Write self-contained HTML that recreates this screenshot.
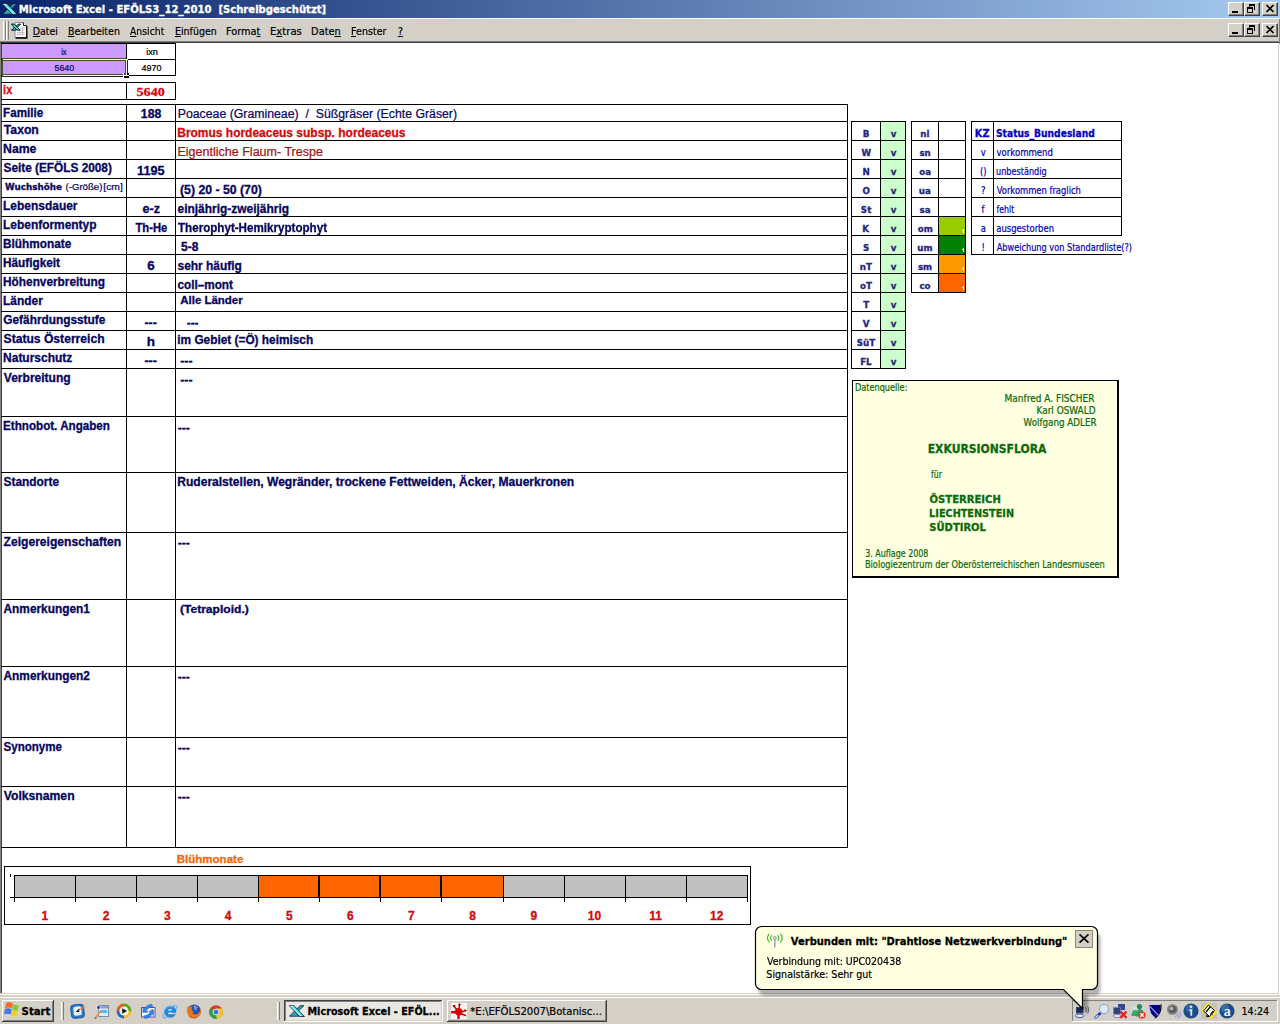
<!DOCTYPE html>
<html lang="de"><head><meta charset="utf-8"><title>Microsoft Excel - EFÖLS3_12_2010 [Schreibgeschützt]</title>
<style>
html,body{margin:0;padding:0;background:#fff}
#s{position:relative;width:1280px;height:1024px;overflow:hidden;background:#fff}
#s>div,#s>span,#s>svg{position:absolute}
#s>span{white-space:pre;transform-origin:0 0;display:block}
#s svg{display:block}
.wb{width:16px;height:14px;background:#d4d0c8;box-sizing:border-box;border:1px solid;border-color:#fff #404040 #404040 #fff;box-shadow:inset -1px -1px 0 #808080}
.wb svg{position:absolute;left:0;top:0}
u{text-decoration:underline;text-underline-offset:1px}
</style></head><body><div id="s">
<div style="left:0px;top:0px;width:1280px;height:18px;background:linear-gradient(90deg,#0a246a,#a6caf0);"></div>
<div style="left:0px;top:18px;width:1280px;height:1px;background:#fff;"></div>
<div style="left:0px;top:19px;width:1280px;height:22px;background:#d4d0c8;"></div>
<div style="left:0px;top:41px;width:1280px;height:1px;background:#808080;"></div>
<div style="left:0px;top:42px;width:1280px;height:1px;background:#404040;"></div>
<div style="left:1279px;top:19px;width:1px;height:25px;background:#808080;"></div>
<div style="left:0px;top:43px;width:1px;height:950px;background:#808080;"></div>
<div style="left:1px;top:43px;width:1px;height:950px;background:#404040;"></div>
<div style="left:1278px;top:44px;width:1px;height:950px;background:#d4d0c8;"></div>
<div style="left:0px;top:993px;width:1279px;height:1px;background:#d4d0c8;"></div>
<div style="left:0px;top:994px;width:1280px;height:1px;background:#fff;"></div>
<div style="left:0px;top:995px;width:1280px;height:2px;background:#d4d0c8;"></div>
<div style="left:0px;top:997px;width:1280px;height:1px;background:#fff;"></div>
<div style="left:0px;top:998px;width:1280px;height:26px;background:#d4d0c8;"></div>
<div style="left:3px;top:21px;width:1px;height:19px;background:#fff;"></div>
<div style="left:4px;top:21px;width:1px;height:19px;background:#d4d0c8;"></div>
<div style="left:5px;top:21px;width:1px;height:19px;background:#808080;"></div>
<div style="left:6px;top:21px;width:1px;height:19px;background:#fff;"></div>
<div style="left:7px;top:21px;width:1px;height:19px;background:#d4d0c8;"></div>
<div style="left:8px;top:21px;width:1px;height:19px;background:#808080;"></div>
<div class="wb" style="left:1228px;top:2px"><svg width="16" height="14" viewBox="1 1 16 14"><rect x="4" y="9" width="6" height="2" fill="#000"/></svg></div>
<div class="wb" style="left:1244px;top:2px"><svg width="16" height="14" viewBox="1 1 16 14"><path d="M5 2h5v5h-1M5 2v2" fill="none" stroke="#000" stroke-width="1" shape-rendering="crispEdges" transform="translate(.5 .5)"/><rect x="5" y="2" width="6" height="2" fill="#000"/><rect x="3.5" y="5.5" width="5" height="5" fill="none" stroke="#000" shape-rendering="crispEdges"/><rect x="3" y="5" width="6" height="2" fill="#000"/></svg></div>
<div class="wb" style="left:1262px;top:2px"><svg width="16" height="14" viewBox="1 1 16 14"><path d="M4.500 3l7 7M11.500 3l-7 7" stroke="#000" stroke-width="1.700" fill="none"/></svg></div>
<div class="wb" style="left:1228px;top:23px"><svg width="16" height="14" viewBox="1 1 16 14"><rect x="4" y="9" width="6" height="2" fill="#000"/></svg></div>
<div class="wb" style="left:1244px;top:23px"><svg width="16" height="14" viewBox="1 1 16 14"><path d="M5 2h5v5h-1M5 2v2" fill="none" stroke="#000" stroke-width="1" shape-rendering="crispEdges" transform="translate(.5 .5)"/><rect x="5" y="2" width="6" height="2" fill="#000"/><rect x="3.5" y="5.5" width="5" height="5" fill="none" stroke="#000" shape-rendering="crispEdges"/><rect x="3" y="5" width="6" height="2" fill="#000"/></svg></div>
<div class="wb" style="left:1262px;top:23px"><svg width="16" height="14" viewBox="1 1 16 14"><path d="M4.500 3l7 7M11.500 3l-7 7" stroke="#000" stroke-width="1.700" fill="none"/></svg></div>
<div style="left:2px;top:44px;width:124px;height:31px;background:#cc99ff;"></div>
<div style="left:1px;top:43px;width:175px;height:1px;background:#000;"></div>
<div style="left:1px;top:59px;width:175px;height:1px;background:#000;"></div>
<div style="left:1px;top:75px;width:175px;height:1px;background:#000;"></div>
<div style="left:126px;top:43px;width:1px;height:33px;background:#000;"></div>
<div style="left:175px;top:43px;width:1px;height:33px;background:#000;"></div>
<div style="left:2px;top:58px;width:124px;height:1px;background:#44502c;"></div>
<div style="left:2px;top:59px;width:126px;height:1px;background:#f4f8e0;"></div>
<div style="left:3px;top:60px;width:122px;height:1px;background:#44502c;"></div>
<div style="left:2px;top:74px;width:121px;height:1px;background:#44502c;"></div>
<div style="left:2px;top:75px;width:121px;height:1px;background:#f4f8e0;"></div>
<div style="left:1px;top:76px;width:122px;height:1px;background:#222;"></div>
<div style="left:2px;top:58px;width:1px;height:19px;background:#44502c;"></div>
<div style="left:125px;top:60px;width:1px;height:13px;background:#44502c;"></div>
<div style="left:126px;top:60px;width:1px;height:13px;background:#f4f8e0;"></div>
<div style="left:127px;top:60px;width:1px;height:13px;background:#222;"></div>
<div style="left:123px;top:73px;width:6px;height:5px;background:#fff;"></div>
<div style="left:124px;top:73px;width:2px;height:2px;background:#44502c;"></div>
<div style="left:127px;top:73px;width:2px;height:2px;background:#000;"></div>
<div style="left:124px;top:76px;width:5px;height:2px;background:#000;"></div>
<div style="left:1px;top:82px;width:175px;height:1px;background:#000;"></div>
<div style="left:1px;top:99px;width:175px;height:1px;background:#000;"></div>
<div style="left:126px;top:82px;width:1px;height:18px;background:#000;"></div>
<div style="left:175px;top:82px;width:1px;height:18px;background:#000;"></div>
<div style="left:1px;top:104px;width:847px;height:1px;background:#000;"></div>
<div style="left:1px;top:121px;width:847px;height:1px;background:#000;"></div>
<div style="left:1px;top:140px;width:847px;height:1px;background:#000;"></div>
<div style="left:1px;top:159px;width:847px;height:1px;background:#000;"></div>
<div style="left:1px;top:178px;width:847px;height:1px;background:#000;"></div>
<div style="left:1px;top:197px;width:847px;height:1px;background:#000;"></div>
<div style="left:1px;top:216px;width:847px;height:1px;background:#000;"></div>
<div style="left:1px;top:235px;width:847px;height:1px;background:#000;"></div>
<div style="left:1px;top:254px;width:847px;height:1px;background:#000;"></div>
<div style="left:1px;top:273px;width:847px;height:1px;background:#000;"></div>
<div style="left:1px;top:292px;width:847px;height:1px;background:#000;"></div>
<div style="left:1px;top:311px;width:847px;height:1px;background:#000;"></div>
<div style="left:1px;top:330px;width:847px;height:1px;background:#000;"></div>
<div style="left:1px;top:349px;width:847px;height:1px;background:#000;"></div>
<div style="left:1px;top:368px;width:847px;height:1px;background:#000;"></div>
<div style="left:1px;top:416px;width:847px;height:1px;background:#000;"></div>
<div style="left:1px;top:472px;width:847px;height:1px;background:#000;"></div>
<div style="left:1px;top:532px;width:847px;height:1px;background:#000;"></div>
<div style="left:1px;top:599px;width:847px;height:1px;background:#000;"></div>
<div style="left:1px;top:666px;width:847px;height:1px;background:#000;"></div>
<div style="left:1px;top:737px;width:847px;height:1px;background:#000;"></div>
<div style="left:1px;top:786px;width:847px;height:1px;background:#000;"></div>
<div style="left:1px;top:847px;width:847px;height:1px;background:#000;"></div>
<div style="left:126px;top:104px;width:1px;height:744px;background:#000;"></div>
<div style="left:175px;top:104px;width:1px;height:744px;background:#000;"></div>
<div style="left:847px;top:104px;width:1px;height:744px;background:#000;"></div>
<div style="left:881px;top:122px;width:24px;height:246px;background:#ccffcc;"></div>
<div style="left:851px;top:121px;width:55px;height:1px;background:#000;"></div>
<div style="left:851px;top:140px;width:55px;height:1px;background:#000;"></div>
<div style="left:851px;top:159px;width:55px;height:1px;background:#000;"></div>
<div style="left:851px;top:178px;width:55px;height:1px;background:#000;"></div>
<div style="left:851px;top:197px;width:55px;height:1px;background:#000;"></div>
<div style="left:851px;top:216px;width:55px;height:1px;background:#000;"></div>
<div style="left:851px;top:235px;width:55px;height:1px;background:#000;"></div>
<div style="left:851px;top:254px;width:55px;height:1px;background:#000;"></div>
<div style="left:851px;top:273px;width:55px;height:1px;background:#000;"></div>
<div style="left:851px;top:292px;width:55px;height:1px;background:#000;"></div>
<div style="left:851px;top:311px;width:55px;height:1px;background:#000;"></div>
<div style="left:851px;top:330px;width:55px;height:1px;background:#000;"></div>
<div style="left:851px;top:349px;width:55px;height:1px;background:#000;"></div>
<div style="left:851px;top:368px;width:55px;height:1px;background:#000;"></div>
<div style="left:851px;top:121px;width:1px;height:248px;background:#000;"></div>
<div style="left:880px;top:121px;width:1px;height:248px;background:#000;"></div>
<div style="left:905px;top:121px;width:1px;height:248px;background:#000;"></div>
<div style="left:939px;top:217px;width:26px;height:18px;background:#99cc00;"></div>
<div style="left:963px;top:229px;width:1px;height:4px;background:#fff;"></div>
<div style="left:962px;top:230px;width:1px;height:1px;background:#fff;"></div>
<div style="left:939px;top:236px;width:26px;height:18px;background:#008000;"></div>
<div style="left:963px;top:248px;width:1px;height:4px;background:#fff;"></div>
<div style="left:962px;top:249px;width:1px;height:1px;background:#fff;"></div>
<div style="left:939px;top:255px;width:26px;height:18px;background:#ff9900;"></div>
<div style="left:963px;top:267px;width:1px;height:4px;background:#fff;"></div>
<div style="left:962px;top:268px;width:1px;height:1px;background:#fff;"></div>
<div style="left:939px;top:274px;width:26px;height:18px;background:#ff6600;"></div>
<div style="left:963px;top:286px;width:1px;height:4px;background:#fff;"></div>
<div style="left:962px;top:287px;width:1px;height:1px;background:#fff;"></div>
<div style="left:911px;top:121px;width:55px;height:1px;background:#000;"></div>
<div style="left:911px;top:140px;width:55px;height:1px;background:#000;"></div>
<div style="left:911px;top:159px;width:55px;height:1px;background:#000;"></div>
<div style="left:911px;top:178px;width:55px;height:1px;background:#000;"></div>
<div style="left:911px;top:197px;width:55px;height:1px;background:#000;"></div>
<div style="left:911px;top:216px;width:55px;height:1px;background:#000;"></div>
<div style="left:911px;top:235px;width:55px;height:1px;background:#000;"></div>
<div style="left:911px;top:254px;width:55px;height:1px;background:#000;"></div>
<div style="left:911px;top:273px;width:55px;height:1px;background:#000;"></div>
<div style="left:911px;top:292px;width:55px;height:1px;background:#000;"></div>
<div style="left:911px;top:121px;width:1px;height:172px;background:#000;"></div>
<div style="left:938px;top:121px;width:1px;height:172px;background:#000;"></div>
<div style="left:965px;top:121px;width:1px;height:172px;background:#000;"></div>
<div style="left:971px;top:121px;width:151px;height:1px;background:#000;"></div>
<div style="left:971px;top:140px;width:151px;height:1px;background:#000;"></div>
<div style="left:971px;top:159px;width:151px;height:1px;background:#000;"></div>
<div style="left:971px;top:178px;width:151px;height:1px;background:#000;"></div>
<div style="left:971px;top:197px;width:151px;height:1px;background:#000;"></div>
<div style="left:971px;top:216px;width:151px;height:1px;background:#000;"></div>
<div style="left:971px;top:235px;width:151px;height:1px;background:#000;"></div>
<div style="left:971px;top:254px;width:151px;height:1px;background:#000;"></div>
<div style="left:971px;top:121px;width:1px;height:134px;background:#000;"></div>
<div style="left:993px;top:121px;width:1px;height:134px;background:#000;"></div>
<div style="left:1121px;top:121px;width:1px;height:115px;background:#000;"></div>
<div style="left:852px;top:380px;width:267px;height:198px;background:#000;"></div>
<div style="left:853px;top:381px;width:264px;height:195px;background:#ffffe1;"></div>
<div style="left:4px;top:866px;width:747px;height:59px;background:#000;"></div>
<div style="left:5px;top:867px;width:745px;height:57px;background:#fff;"></div>
<div style="left:14px;top:875px;width:734px;height:23px;background:#000;"></div>
<div style="left:15px;top:876px;width:60px;height:21px;background:#c0c0c0;"></div>
<div style="left:76px;top:876px;width:60px;height:21px;background:#c0c0c0;"></div>
<div style="left:137px;top:876px;width:60px;height:21px;background:#c0c0c0;"></div>
<div style="left:198px;top:876px;width:60px;height:21px;background:#c0c0c0;"></div>
<div style="left:259px;top:876px;width:59px;height:21px;background:#ff6600;"></div>
<div style="left:320px;top:876px;width:59px;height:21px;background:#ff6600;"></div>
<div style="left:381px;top:876px;width:59px;height:21px;background:#ff6600;"></div>
<div style="left:442px;top:876px;width:61px;height:21px;background:#ff6600;"></div>
<div style="left:504px;top:876px;width:60px;height:21px;background:#c0c0c0;"></div>
<div style="left:565px;top:876px;width:60px;height:21px;background:#c0c0c0;"></div>
<div style="left:626px;top:876px;width:60px;height:21px;background:#c0c0c0;"></div>
<div style="left:687px;top:876px;width:60px;height:21px;background:#c0c0c0;"></div>
<div style="left:14px;top:898px;width:1px;height:4px;background:#000;"></div>
<div style="left:75px;top:898px;width:1px;height:4px;background:#000;"></div>
<div style="left:136px;top:898px;width:1px;height:4px;background:#000;"></div>
<div style="left:197px;top:898px;width:1px;height:4px;background:#000;"></div>
<div style="left:258px;top:898px;width:1px;height:4px;background:#000;"></div>
<div style="left:319px;top:898px;width:1px;height:4px;background:#000;"></div>
<div style="left:380px;top:898px;width:1px;height:4px;background:#000;"></div>
<div style="left:441px;top:898px;width:1px;height:4px;background:#000;"></div>
<div style="left:503px;top:898px;width:1px;height:4px;background:#000;"></div>
<div style="left:564px;top:898px;width:1px;height:4px;background:#000;"></div>
<div style="left:625px;top:898px;width:1px;height:4px;background:#000;"></div>
<div style="left:686px;top:898px;width:1px;height:4px;background:#000;"></div>
<div style="left:747px;top:898px;width:1px;height:4px;background:#000;"></div>
<div style="left:10px;top:897px;width:4px;height:1px;background:#000;"></div>
<div style="left:10px;top:874px;width:1px;height:3px;background:#000;"></div>
<div style="left:2px;top:1000px;width:52px;height:22px;background:#404040;"></div>
<div style="left:2px;top:1000px;width:51px;height:21px;background:#fff;"></div>
<div style="left:3px;top:1001px;width:50px;height:20px;background:#808080;"></div>
<div style="left:3px;top:1001px;width:49px;height:19px;background:#d4d0c8;"></div>
<div style="left:61px;top:1002px;width:1px;height:18px;background:#fff;"></div>
<div style="left:62px;top:1002px;width:1px;height:18px;background:#d4d0c8;"></div>
<div style="left:63px;top:1002px;width:1px;height:18px;background:#808080;"></div>
<div style="left:277px;top:1002px;width:1px;height:18px;background:#fff;"></div>
<div style="left:278px;top:1002px;width:1px;height:18px;background:#d4d0c8;"></div>
<div style="left:279px;top:1002px;width:1px;height:18px;background:#808080;"></div>
<div style="left:284px;top:1000px;width:159px;height:22px;background:#fff;"></div>
<div style="left:284px;top:1000px;width:158px;height:21px;background:#404040;"></div>
<div style="left:285px;top:1001px;width:157px;height:20px;background:#d4d0c8;"></div>
<div style="left:285px;top:1001px;width:156px;height:19px;background:#808080;"></div>
<div style="left:286px;top:1002px;width:155px;height:18px;background:#e9e7e2;"></div>
<div style="left:447px;top:1000px;width:160px;height:22px;background:#404040;"></div>
<div style="left:447px;top:1000px;width:159px;height:21px;background:#fff;"></div>
<div style="left:448px;top:1001px;width:158px;height:20px;background:#808080;"></div>
<div style="left:448px;top:1001px;width:157px;height:19px;background:#d4d0c8;"></div>
<div style="left:1072px;top:1000px;width:206px;height:22px;background:#fff;"></div>
<div style="left:1072px;top:1000px;width:205px;height:21px;background:#808080;"></div>
<div style="left:1073px;top:1001px;width:204px;height:20px;background:#d4d0c8;"></div>
<div style="left:2px;top:1px;width:16px;height:16px"><svg width="16" height="16" viewBox="0 0 16 16"><path d="M0.500 13.200L5.600 8 10 13.200z" fill="#2cacac" stroke="#04103c" stroke-width=".8" stroke-linejoin="round"/><path d="M7.400 6.400L11.200 2.700h3.600L9.200 8.200z" fill="#2cacac" stroke="#04103c" stroke-width=".8" stroke-linejoin="round"/><path d="M0.300 2.700h4.700L15.400 13.500h-4.800z" fill="#40e4e4" stroke="#04103c" stroke-width=".8" stroke-linejoin="round"/><path d="M1.300 3.400h3M3.300 4.500L11.800 13" stroke="#d0ffff" stroke-width="1" fill="none"/></svg></div>
<div style="left:11px;top:21px;width:17px;height:18px"><svg width="17" height="18" viewBox="0 0 17 18"><path d="M4 1.500h8.500l3 3v12H4z" fill="#fff" stroke="#8a8a8a" stroke-width="1"/><path d="M15.800 5v12H4.600" fill="none" stroke="#000" stroke-width="1.300"/><path d="M12.500 1.500v3h3" fill="#fff" stroke="#000" stroke-width=".9"/><path d="M9.500 7h4M9.500 9h4M6 11.500h7.500M6 13.500h7.500M8.500 10.500v4M11.500 6v8.500" stroke="#c0c0c0" stroke-width="1" fill="none"/><path d="M.5 9.200l3.200-3.200 2.200 2.400-1 .8zM5 5.400l2.300-2.300h2.200l-3.400 3.500z" fill="#30c0c0" stroke="#000" stroke-width=".9" stroke-linejoin="round"/><path d="M.4 3.100h3l5.800 6.100h-3z" fill="#48e4e4" stroke="#000" stroke-width=".9" stroke-linejoin="round"/></svg></div>
<div style="left:4px;top:1002px;width:16px;height:16px"><svg width="16" height="16" viewBox="0 0 16 16"><path d="M2.200 1.200C4 0 6.500 0 9 1.500L8 6.500C6 5.200 3.500 5.200 1.200 6.200z" fill="#f06a28"/><path d="M9.600 2.200C11.500 3.500 13 3.500 14.800 3L13.600 8.600C12 9 10.300 8.800 8.600 7.400z" fill="#7cd020"/><path d="M1 7C3 6 5.500 6 7.800 7.400L6.800 12.600C4.600 11.400 2.200 11.400 0 12.400z" fill="#4878e0"/><path d="M8.400 8.200C10 9.500 11.800 9.800 13.500 9.300L12.400 14.400C10.600 14.900 8.900 14.600 7.300 13.400z" fill="#f8d010"/></svg></div>
<div style="left:70px;top:1003px;width:16px;height:16px"><svg width="16" height="16" viewBox="0 0 16 16"><rect x="1" y="1.500" width="13" height="13.500" rx="3" fill="#2a78c8" stroke="#1a4c94" stroke-width=".8" transform="rotate(-6 8 8)"/><rect x="3.500" y="3.500" width="8" height="9" rx="2" fill="#e8f4ff" transform="rotate(-6 8 8)"/><path d="M6 8.500h3.500M9.500 6l-2.500 2.500" stroke="#202020" stroke-width="1.200" fill="none"/><path d="M10.500 6.500l4-3" stroke="#e87830" stroke-width="1.600"/></svg></div>
<div style="left:94px;top:1003px;width:16px;height:16px"><svg width="16" height="16" viewBox="0 0 16 16"><rect x="4.500" y="2.500" width="10" height="11" fill="#dcecfc" stroke="#7a8aa8" stroke-width="1"/><rect x="5" y="3" width="9" height="2.500" fill="#7aa8e0"/><rect x="6" y="7" width="7" height="3" fill="#58b8f0"/><rect x="3" y="3" width="3" height="3" fill="#1818a8" stroke="#fff" stroke-width=".5"/><path d="M1 15l6-7" stroke="#e89848" stroke-width="1.600"/><path d="M.5 15.500l2-1" stroke="#806040" stroke-width="1.200"/></svg></div>
<div style="left:116px;top:1003px;width:16px;height:16px"><svg width="16" height="16" viewBox="0 0 16 16"><path d="M8 8L8 .5A7.500 7.500 0 0 0 .5 8z" fill="#e85820"/><path d="M8 8L15.500 8A7.500 7.500 0 0 0 8 .5z" fill="#5aa820"/><path d="M8 8L.5 8A7.500 7.500 0 0 0 8 15.500z" fill="#2868c8"/><path d="M8 8L8 15.500A7.500 7.500 0 0 0 15.500 8z" fill="#f0c028"/><circle cx="8" cy="8" r="4.600" fill="#f4f4f4"/><path d="M6.200 5.200L11.200 8 6.200 10.800z" fill="#181818"/></svg></div>
<div style="left:140px;top:1003px;width:16px;height:16px"><svg width="16" height="16" viewBox="0 0 16 16"><rect x="1.500" y="4.500" width="13.500" height="9.500" fill="#fcfcff" stroke="#5058a0" stroke-width="1"/><rect x="11.300" y="6.300" width="1.800" height="1.800" fill="#c85038"/><path d="M5 9.500h3" stroke="#a0a0a8" stroke-width="1"/><path d="M11.500 1.200c-3 .5-5.500 2-7 4.300l-1.300-1.300-.4 5.300 5-1-1.400-1.300c1.500-2 3.500-3 6.600-3.300z" fill="#2c88f0" stroke="#1c50b0" stroke-width=".5"/><path d="M5 15.600c3-.5 5.500-2 7-4.300l1.300 1.300.4-5.300-5 1 1.400 1.300c-1.500 2-3.500 3-6.600 3.300z" fill="#2c88f0" stroke="#1c50b0" stroke-width=".5"/></svg></div>
<div style="left:162px;top:1003px;width:16px;height:16px"><svg width="16" height="16" viewBox="0 0 16 16"><ellipse cx="8" cy="8.500" rx="8.600" ry="3" fill="none" stroke="#68b4f4" stroke-width="1.100" transform="rotate(-40 8 8.500)"/><circle cx="8.300" cy="8.700" r="6" fill="#2488e0"/><path d="M3 6.500c1.500-3 5-4 8-2.500" stroke="#58b0f8" stroke-width="1.200" fill="none"/><rect x="6.300" y="6.200" width="3.600" height="1.300" rx=".6" fill="#f4faff"/><rect x="6.300" y="9.800" width="8.500" height="1.300" fill="#d4d0c8"/><rect x="6.300" y="9.800" width="4" height="1.300" rx=".6" fill="#f4faff"/><path d="M1 14.500c.5 1 2 1 3.500 0" stroke="#68b4f4" stroke-width="1" fill="none"/></svg></div>
<div style="left:186px;top:1003px;width:16px;height:16px"><svg width="16" height="16" viewBox="0 0 16 16"><circle cx="8.200" cy="8" r="6.600" fill="#2c50a8"/><path d="M8 2.500c2 0 3.500 1 4.300 2.300-1-.4-2-.3-2.600 .200 1 .5 1.500 1.500 1.300 2.500-.800-1-1.800-1.300-2.800-1z" fill="#78a8e8"/><path d="M1.200 3c.3 1 .3 1.700 0 2.500-1 3.500 .5 7.500 4 9 3.500 1.400 7.500 0 9.300-3.300 1-2 1-4.500 0-6.500 .3 2.500-.7 4.800-2.800 6-2 1.200-4.500 .6-5.700-1 1 .2 2 0 2.700-.6-1.500-.200-2.700-1.300-2.900-2.700-.2-1.200 .2-2.200 1-3-1.500 0-2.400 .4-3.100 1.200C3.200 4 2.200 3.300 1.200 3z" fill="#e87818"/><path d="M3 13c2 2 5.500 2.700 8.300 1.200" stroke="#c85010" stroke-width="1" fill="none"/></svg></div>
<div style="left:208px;top:1003px;width:16px;height:16px"><svg width="16" height="16" viewBox="0 0 16 16"><circle cx="8" cy="9" r="6.800" fill="#d83828"/><path d="M8 9L2.100 5.600A6.800 6.800 0 0 0 8.600 15.800L11.400 11z" fill="#2ca048"/><path d="M8 9L8.600 15.800A6.800 6.800 0 0 0 13.900 5.600L8 5.600z" fill="#f4c818"/><circle cx="8" cy="9" r="3.300" fill="#f4f4f4"/><circle cx="8" cy="9" r="2.500" fill="#3a78e0"/></svg></div>
<div style="left:289px;top:1003px;width:16px;height:16px"><svg width="16" height="16" viewBox="0 0 16 16"><path d="M0.500 13.200L5.600 8 10 13.200z" fill="#2cacac" stroke="#04103c" stroke-width=".8" stroke-linejoin="round"/><path d="M7.400 6.400L11.200 2.700h3.600L9.200 8.200z" fill="#2cacac" stroke="#04103c" stroke-width=".8" stroke-linejoin="round"/><path d="M0.300 2.700h4.700L15.400 13.500h-4.800z" fill="#40e4e4" stroke="#04103c" stroke-width=".8" stroke-linejoin="round"/><path d="M1.300 3.400h3M3.300 4.500L11.800 13" stroke="#d0ffff" stroke-width="1" fill="none"/></svg></div>
<div style="left:451px;top:1003px;width:16px;height:16px"><svg width="16" height="16" viewBox="0 0 16 16"><rect x="0" y="0" width="16" height="16" fill="#f6f6f6"/><circle cx="7.700" cy="8.800" r="3.700" fill="#e40000"/><path d="M7.700 9L1 9.300M7.600 9L7.500 15.500" stroke="#d80000" stroke-width="2.400" stroke-linecap="round"/><path d="M7 8L2.700 3M7.800 8L8.400 1.300M9 9L14.800 7.700M9.500 10.500L14.500 12.500" stroke="#d00000" stroke-width="1.500" stroke-linecap="round"/><path d="M2.300 2.600l1.700 .3M8 1.300l1.300 .3M13.500 7l1.500 .3" stroke="#900000" stroke-width="1.200" stroke-linecap="round"/></svg></div>
<div style="left:1075px;top:1003px;width:16px;height:16px"><svg width="16" height="16" viewBox="0 0 16 16"><rect x="1" y="4" width="7.500" height="6.500" fill="#30407c"/><rect x="2" y="5" width="5.500" height="4.500" fill="#1c2858"/><ellipse cx="4.800" cy="12.800" rx="4.200" ry="1.800" fill="#e8ecf8" stroke="#4858a8" stroke-width="1"/><path d="M10.500 4.500c1 1.200 1 3.300 0 4.500M12.500 3.300c1.500 2 1.500 5 0 7" stroke="#58606c" stroke-width=".9" fill="none"/></svg></div>
<div style="left:1094px;top:1003px;width:16px;height:16px"><svg width="16" height="16" viewBox="0 0 16 16"><path d="M7 9.500L1.800 14.200" stroke="#2048b8" stroke-width="2.800" stroke-linecap="round"/><path d="M3.800 12.500l-2 1.800" stroke="#e8f0ff" stroke-width="1.200" stroke-linecap="round"/><circle cx="10" cy="6" r="4.600" fill="#dcecfc" stroke="#98b0cc" stroke-width="1.300"/></svg></div>
<div style="left:1112px;top:1003px;width:16px;height:16px"><svg width="16" height="16" viewBox="0 0 16 16"><rect x="6" y="1" width="7" height="6" fill="#38488c"/><rect x="1.500" y="4.500" width="7" height="6.500" fill="#30407c" stroke="#7c88c0" stroke-width=".6"/><ellipse cx="5" cy="13" rx="3.800" ry="1.600" fill="#e4e8f8" stroke="#6070b8" stroke-width=".8"/><path d="M8.500 8.500l6 6.500M14.500 8.500l-6 6.500" stroke="#e02020" stroke-width="2.200"/></svg></div>
<div style="left:1130px;top:1003px;width:16px;height:16px"><svg width="16" height="16" viewBox="0 0 16 16"><circle cx="4.500" cy="4.500" r="2" fill="#c8e4f4"/><path d="M1.500 13c0-4 1.500-6 3.500-6s3 2 3 6z" fill="#38a878"/><circle cx="9.500" cy="3.500" r="2.600" fill="#1c8c5c"/><path d="M6 13.500c0-5 1.500-7.500 4-7.500s4 2.500 4 7.500z" fill="#28a068"/><circle cx="12" cy="12" r="3.600" fill="#e03818"/><path d="M10.300 10.300l3.400 3.400M13.700 10.300l-3.400 3.400" stroke="#fff" stroke-width="1.400"/></svg></div>
<div style="left:1147px;top:1003px;width:16px;height:16px"><svg width="16" height="16" viewBox="0 0 16 16"><path d="M2 1.500h12c.3 6-1.500 10.500-6 13.500C3.500 12 1.700 7.500 2 1.500z" fill="#000084" stroke="#c8c8d4" stroke-width="1.200"/><path d="M14 1.500c.3 6-1.500 10.500-6 13.500" fill="none" stroke="#000" stroke-width="1.200"/><path d="M3 3.500l8.500 9" stroke="#9898e8" stroke-width="1.100"/></svg></div>
<div style="left:1166px;top:1003px;width:16px;height:16px"><svg width="16" height="16" viewBox="0 0 16 16"><circle cx="6.500" cy="6.500" r="5.600" fill="#8c8c8c"/><circle cx="6.500" cy="6.500" r="3.800" fill="#5c5c5c"/><circle cx="5.500" cy="5.500" r="1.800" fill="#b8b8b8"/><path d="M9 14c2.500-1 4.500-3 5.500-5.500M11.500 15c1.800-1 3-2.300 4-4" stroke="#9c98e8" stroke-width="1.100" fill="none"/></svg></div>
<div style="left:1183px;top:1003px;width:16px;height:16px"><svg width="16" height="16" viewBox="0 0 16 16"><circle cx="8" cy="8" r="7.600" fill="#1c4c88"/><circle cx="6.500" cy="5.500" r="4" fill="#3c70a8" opacity=".7"/><circle cx="8" cy="3.800" r="1.300" fill="#d8ecff"/><path d="M6.300 6.300h2.900v6.400h-1.800v-5h-1.100z" fill="#d8ecff"/></svg></div>
<div style="left:1201px;top:1003px;width:16px;height:16px"><svg width="16" height="16" viewBox="0 0 16 16"><rect x="0" y="0" width="16" height="16" fill="#c4c0b8"/><path d="M6.800 -.5L16.300 8.500 9.700 16.300 .2 7.300z" fill="#f6ea20"/><path d="M7.500 2l6 5.500-5 6L2.500 8z" fill="#fff" stroke="#000" stroke-width="1"/><path d="M5 9l4.500-5.500M9.500 11.500l3-3.500M6 11.500v2h3" stroke="#000" stroke-width="1.200" fill="none"/><circle cx="11" cy="11.500" r=".9" fill="#e03030"/></svg></div>
<div style="left:1219px;top:1003px;width:16px;height:16px"><svg width="16" height="16" viewBox="0 0 16 16"><circle cx="8" cy="8" r="7.600" fill="#1c4c88"/><circle cx="6" cy="5" r="4" fill="#4c80b8" opacity=".6"/><text x="8.200" y="12.600" font-family="Liberation Serif,serif" font-weight="bold" font-size="14" text-anchor="middle" fill="#e8f4ff">a</text></svg></div>
<svg width="360" height="96" viewBox="750 920 360 96" style="left:750px;top:920px"><defs><filter id="bs" x="-5%" y="-10%" width="115%" height="130%"><feGaussianBlur stdDeviation="1.400"/></filter></defs><path d="M761.500 929.500h330a6 6 0 0 1 6 6v51a6 6 0 0 1-6 6h-6.500v19l-19-19h-304.500a6 6 0 0 1-6-6v-51a6 6 0 0 1 6-6z" fill="#000" opacity=".3" filter="url(#bs)" transform="translate(3 3)"/><path d="M761.500 926.500h330a6 6 0 0 1 6 6v51a6 6 0 0 1-6 6h-9v19l-19-19h-302a6 6 0 0 1-6-6v-51a6 6 0 0 1 6-6z" fill="#ffffe1" stroke="#000" stroke-width="1.200"/></svg>
<div style="left:1075px;top:930px;width:18px;height:18px;background:#8a867c;"></div>
<div style="left:1076px;top:931px;width:16px;height:16px;background:#d4d0c8;"></div>
<div style="left:1078px;top:933px;width:12px;height:11px"><svg width="12" height="11" viewBox="0 0 12 11"><path d="M1.500 1.300l9 8.400M10.500 1.300l-9 8.400" stroke="#000" stroke-width="1.700" fill="none"/></svg></div>
<div style="left:766px;top:933px;width:18px;height:16px"><svg width="18" height="16" viewBox="0 0 18 16"><path d="M8.800 5.500v9" stroke="#a8a8b4" stroke-width="1.600"/><circle cx="8.800" cy="5" r="1.700" fill="#c4c4cc" stroke="#888" stroke-width=".5"/><path d="M5.800 2.300c-1.300 1.500-1.300 4 0 5.500M11.800 2.300c1.300 1.500 1.300 4 0 5.500M3.300 .8c-2.200 2.500-2.200 6 0 8.500M14.300 .8c2.200 2.500 2.200 6 0 8.500" stroke="#38b828" stroke-width="1.100" fill="none"/></svg></div>
<span style='left:18px;top:3px;font:bold 11px/14px "DejaVu Sans", "Liberation Sans", sans-serif;color:#fff;transform:translateX(0.79px) scaleX(0.9143);-webkit-text-stroke:0.3px'>Microsoft Excel - EFÖLS3_12_2010  [Schreibgeschützt]</span>
<span style='left:32px;top:25px;font:11px/14px "DejaVu Sans", "Liberation Sans", sans-serif;color:#000;transform:translateX(0.80px) scaleX(0.8561);-webkit-text-stroke:0.22px'><u>D</u>atei</span>
<span style='left:67px;top:25px;font:11px/14px "DejaVu Sans", "Liberation Sans", sans-serif;color:#000;transform:translateX(0.90px) scaleX(0.8605);-webkit-text-stroke:0.22px'><u>B</u>earbeiten</span>
<span style='left:130px;top:25px;font:11px/14px "DejaVu Sans", "Liberation Sans", sans-serif;color:#000;transform:translateX(0.00px) scaleX(0.8444);-webkit-text-stroke:0.22px'><u>A</u>nsicht</span>
<span style='left:174px;top:25px;font:11px/14px "DejaVu Sans", "Liberation Sans", sans-serif;color:#000;transform:translateX(0.90px) scaleX(0.8628);-webkit-text-stroke:0.22px'><u>E</u>infügen</span>
<span style='left:225px;top:25px;font:11px/14px "DejaVu Sans", "Liberation Sans", sans-serif;color:#000;transform:translateX(0.91px) scaleX(0.8901);-webkit-text-stroke:0.22px'>Forma<u>t</u></span>
<span style='left:269px;top:25px;font:11px/14px "DejaVu Sans", "Liberation Sans", sans-serif;color:#000;transform:translateX(0.99px) scaleX(0.9143);-webkit-text-stroke:0.22px'>E<u>x</u>tras</span>
<span style='left:311px;top:25px;font:11px/14px "DejaVu Sans", "Liberation Sans", sans-serif;color:#000;transform:translateX(0.11px) scaleX(0.8899);-webkit-text-stroke:0.22px'>Date<u>n</u></span>
<span style='left:351px;top:25px;font:11px/14px "DejaVu Sans", "Liberation Sans", sans-serif;color:#000;transform:translateX(0.00px) scaleX(0.8707);-webkit-text-stroke:0.22px'><u>F</u>enster</span>
<span style='left:397px;top:25px;font:11px/14px "DejaVu Sans", "Liberation Sans", sans-serif;color:#000;transform:translateX(0.90px) scaleX(0.8500);-webkit-text-stroke:0.22px'><u>?</u></span>
<span style='left:61px;top:46px;font:9px/12px "Liberation Sans", sans-serif;color:#06065c;transform:translateX(0.18px) scaleX(0.8333);-webkit-text-stroke:0.22px'>ix</span>
<span style='left:146px;top:46px;font:9px/12px "Liberation Sans", sans-serif;color:#000;transform:translateX(0.19px) scaleX(1.0190);-webkit-text-stroke:0.22px'>ixn</span>
<span style='left:54px;top:62px;font:9px/12px "Liberation Sans", sans-serif;color:#06065c;transform:translateX(0.45px) scaleX(0.9846);-webkit-text-stroke:0.22px'>5640</span>
<span style='left:141px;top:62px;font:9px/12px "Liberation Sans", sans-serif;color:#000;transform:translateX(0.55px) scaleX(0.9949);-webkit-text-stroke:0.22px'>4970</span>
<span style='left:3px;top:82px;font:bold 12px/16px "Liberation Sans", sans-serif;color:#d40a0a;transform:translateX(0.12px) scaleX(0.9081);-webkit-text-stroke:0.3px'>ix</span>
<span style='left:136px;top:83px;font:bold 13.5px/18px "Liberation Serif", serif;color:#d40a0a;transform:translateX(0.58px) scaleX(1.0423);-webkit-text-stroke:0.3px'>5640</span>
<span style='left:3px;top:105px;font:bold 12px/16px "Liberation Sans", sans-serif;color:#06065c;transform:translateX(0.07px) scaleX(0.9689);-webkit-text-stroke:0.3px'>Familie</span>
<span style='left:3px;top:122px;font:bold 12px/16px "Liberation Sans", sans-serif;color:#06065c;transform:translateX(0.80px) scaleX(1.0163);-webkit-text-stroke:0.3px'>Taxon</span>
<span style='left:3px;top:141px;font:bold 12px/16px "Liberation Sans", sans-serif;color:#06065c;transform:translateX(0.03px) scaleX(1.0222);-webkit-text-stroke:0.3px'>Name</span>
<span style='left:3px;top:160px;font:bold 12px/16px "Liberation Sans", sans-serif;color:#06065c;transform:translateX(0.55px) scaleX(0.9840);-webkit-text-stroke:0.3px'>Seite (EFÖLS 2008)</span>
<span style='left:3px;top:198px;font:bold 12px/16px "Liberation Sans", sans-serif;color:#06065c;transform:translateX(0.05px) scaleX(0.9966);-webkit-text-stroke:0.3px'>Lebensdauer</span>
<span style='left:3px;top:217px;font:bold 12px/16px "Liberation Sans", sans-serif;color:#06065c;transform:translateX(0.05px) scaleX(0.9941);-webkit-text-stroke:0.3px'>Lebenformentyp</span>
<span style='left:3px;top:236px;font:bold 12px/16px "Liberation Sans", sans-serif;color:#06065c;transform:translateX(0.06px) scaleX(0.9832);-webkit-text-stroke:0.3px'>Blühmonate</span>
<span style='left:3px;top:255px;font:bold 12px/16px "Liberation Sans", sans-serif;color:#06065c;transform:translateX(0.06px) scaleX(0.9817);-webkit-text-stroke:0.3px'>Häufigkeit</span>
<span style='left:3px;top:274px;font:bold 12px/16px "Liberation Sans", sans-serif;color:#06065c;transform:translateX(0.06px) scaleX(0.9857);-webkit-text-stroke:0.3px'>Höhenverbreitung</span>
<span style='left:3px;top:293px;font:bold 12px/16px "Liberation Sans", sans-serif;color:#06065c;transform:translateX(0.05px) scaleX(0.9936);-webkit-text-stroke:0.3px'>Länder</span>
<span style='left:3px;top:312px;font:bold 12px/16px "Liberation Sans", sans-serif;color:#06065c;transform:translateX(0.31px) scaleX(0.9873);-webkit-text-stroke:0.3px'>Gefährdungsstufe</span>
<span style='left:3px;top:331px;font:bold 12px/16px "Liberation Sans", sans-serif;color:#06065c;transform:translateX(0.55px) scaleX(1.0096);-webkit-text-stroke:0.3px'>Status Österreich</span>
<span style='left:3px;top:350px;font:bold 12px/16px "Liberation Sans", sans-serif;color:#06065c;transform:translateX(0.05px) scaleX(0.9993);-webkit-text-stroke:0.3px'>Naturschutz</span>
<span style='left:3px;top:370px;font:bold 12px/16px "Liberation Sans", sans-serif;color:#06065c;transform:translateX(0.80px) scaleX(1.0030);-webkit-text-stroke:0.3px'>Verbreitung</span>
<span style='left:3px;top:418px;font:bold 12px/16px "Liberation Sans", sans-serif;color:#06065c;transform:translateX(0.07px) scaleX(0.9697);-webkit-text-stroke:0.3px'>Ethnobot. Angaben</span>
<span style='left:3px;top:474px;font:bold 12px/16px "Liberation Sans", sans-serif;color:#06065c;transform:translateX(0.55px) scaleX(0.9901);-webkit-text-stroke:0.3px'>Standorte</span>
<span style='left:3px;top:534px;font:bold 12px/16px "Liberation Sans", sans-serif;color:#06065c;transform:translateX(0.55px) scaleX(1.0082);-webkit-text-stroke:0.3px'>Zeigereigenschaften</span>
<span style='left:3px;top:601px;font:bold 12px/16px "Liberation Sans", sans-serif;color:#06065c;transform:translateX(0.55px) scaleX(0.9879);-webkit-text-stroke:0.3px'>Anmerkungen1</span>
<span style='left:3px;top:668px;font:bold 12px/16px "Liberation Sans", sans-serif;color:#06065c;transform:translateX(0.55px) scaleX(0.9879);-webkit-text-stroke:0.3px'>Anmerkungen2</span>
<span style='left:3px;top:739px;font:bold 12px/16px "Liberation Sans", sans-serif;color:#06065c;transform:translateX(0.56px) scaleX(0.9617);-webkit-text-stroke:0.3px'>Synonyme</span>
<span style='left:3px;top:788px;font:bold 12px/16px "Liberation Sans", sans-serif;color:#06065c;transform:translateX(0.80px) scaleX(1.0137);-webkit-text-stroke:0.3px'>Volksnamen</span>
<span style='left:4px;top:181px;font:bold 9.2px/12px "DejaVu Sans", "Liberation Sans", sans-serif;color:#06065c;transform:translateX(0.96px) scaleX(0.9536);-webkit-text-stroke:0.3px'>Wuchshöhe</span>
<span style='left:65px;top:181px;font:9px/12px "Liberation Sans", sans-serif;color:#06065c;transform:translateX(0.46px) scaleX(1.0716);-webkit-text-stroke:0.22px'>(-Größe)</span>
<span style='left:103px;top:181px;font:9px/12px "Liberation Sans", sans-serif;color:#06065c;transform:translateX(0.33px) scaleX(1.1437);-webkit-text-stroke:0.22px'>[cm]</span>
<span style='left:140px;top:106px;font:bold 12px/16px "Liberation Sans", sans-serif;color:#06065c;transform:translateX(0.83px) scaleX(1.0211);-webkit-text-stroke:0.3px'>188</span>
<span style='left:137px;top:163px;font:bold 12px/16px "Liberation Sans", sans-serif;color:#06065c;transform:translateX(0.11px) scaleX(1.0520);-webkit-text-stroke:0.3px'>1195</span>
<span style='left:142px;top:201px;font:bold 12px/16px "Liberation Sans", sans-serif;color:#06065c;transform:translateX(0.48px) scaleX(1.0476);-webkit-text-stroke:0.3px'>e-z</span>
<span style='left:135px;top:220px;font:bold 12px/16px "Liberation Sans", sans-serif;color:#06065c;transform:translateX(0.50px) scaleX(0.9333);-webkit-text-stroke:0.3px'>Th-He</span>
<span style='left:147px;top:258px;font:bold 12px/16px "Liberation Sans", sans-serif;color:#06065c;transform:translateX(0.24px) scaleX(1.1130);-webkit-text-stroke:0.3px'>6</span>
<span style='left:144px;top:315px;font:bold 12px/16px "Liberation Sans", sans-serif;color:#06065c;transform:translateX(0.49px) scaleX(1.0227);-webkit-text-stroke:0.3px'>---</span>
<span style='left:146px;top:334px;font:bold 12px/16px "Liberation Sans", sans-serif;color:#06065c;transform:translateX(0.66px) scaleX(1.1250);-webkit-text-stroke:0.3px'>h</span>
<span style='left:144px;top:353px;font:bold 12px/16px "Liberation Sans", sans-serif;color:#06065c;transform:translateX(0.49px) scaleX(1.0227);-webkit-text-stroke:0.3px'>---</span>
<span style='left:177px;top:106px;font:12px/16px "Liberation Sans", sans-serif;color:#06065c;transform:translateX(0.73px) scaleX(1.0240);-webkit-text-stroke:0.22px'>Poaceae (Gramineae)  /  Süßgräser (Echte Gräser)</span>
<span style='left:177px;top:125px;font:bold 12px/16px "Liberation Sans", sans-serif;color:#d40a0a;transform:translateX(0.25px) scaleX(0.9978);-webkit-text-stroke:0.3px'>Bromus hordeaceus subsp. hordeaceus</span>
<span style='left:177px;top:144px;font:12px/16px "Liberation Sans", sans-serif;color:#a01414;transform:translateX(0.46px) scaleX(1.0435);-webkit-text-stroke:0.22px'>Eigentliche Flaum- Trespe</span>
<span style='left:179px;top:182px;font:bold 12px/16px "Liberation Sans", sans-serif;color:#06065c;transform:translateX(0.99px) scaleX(1.0222);-webkit-text-stroke:0.3px'>(5) 20 - 50 (70)</span>
<span style='left:177px;top:201px;font:bold 12px/16px "Liberation Sans", sans-serif;color:#06065c;transform:translateX(0.50px) scaleX(0.9955);-webkit-text-stroke:0.3px'>einjährig-zweijährig</span>
<span style='left:178px;top:220px;font:bold 12px/16px "Liberation Sans", sans-serif;color:#06065c;transform:translateX(0.00px) scaleX(0.9675);-webkit-text-stroke:0.3px'>Therophyt-Hemikryptophyt</span>
<span style='left:181px;top:239px;font:bold 12px/16px "Liberation Sans", sans-serif;color:#06065c;transform:translateX(0.00px) scaleX(1.0000);-webkit-text-stroke:0.3px'>5-8</span>
<span style='left:177px;top:258px;font:bold 12px/16px "Liberation Sans", sans-serif;color:#06065c;transform:translateX(0.50px) scaleX(0.9961);-webkit-text-stroke:0.3px'>sehr häufig</span>
<span style='left:177px;top:277px;font:bold 12px/16px "Liberation Sans", sans-serif;color:#06065c;transform:translateX(0.51px) scaleX(0.9778);-webkit-text-stroke:0.3px'>coll–mont</span>
<span style='left:180px;top:293px;font:bold 11px/14px "Liberation Sans", sans-serif;color:#06065c;transform:translateX(0.24px) scaleX(1.0420);-webkit-text-stroke:0.3px'>Alle Länder</span>
<span style='left:186px;top:315px;font:bold 11px/14px "Liberation Sans", sans-serif;color:#06065c;transform:translateX(0.73px) scaleX(1.0732);-webkit-text-stroke:0.3px'>---</span>
<span style='left:177px;top:332px;font:bold 12px/16px "Liberation Sans", sans-serif;color:#06065c;transform:translateX(0.26px) scaleX(0.9872);-webkit-text-stroke:0.3px'>im Gebiet (=Ö) heimisch</span>
<span style='left:180px;top:353px;font:bold 11px/14px "Liberation Sans", sans-serif;color:#06065c;transform:translateX(0.22px) scaleX(1.1220);-webkit-text-stroke:0.3px'>---</span>
<span style='left:180px;top:372px;font:bold 11px/14px "Liberation Sans", sans-serif;color:#06065c;transform:translateX(0.22px) scaleX(1.1220);-webkit-text-stroke:0.3px'>---</span>
<span style='left:177px;top:420px;font:bold 11px/14px "Liberation Sans", sans-serif;color:#06065c;transform:translateX(0.73px) scaleX(1.0976);-webkit-text-stroke:0.3px'>---</span>
<span style='left:177px;top:474px;font:bold 12px/16px "Liberation Sans", sans-serif;color:#06065c;transform:translateX(0.25px) scaleX(1.0044);-webkit-text-stroke:0.3px'>Ruderalstellen, Wegränder, trockene Fettweiden, Äcker, Mauerkronen</span>
<span style='left:177px;top:535px;font:bold 11px/14px "Liberation Sans", sans-serif;color:#06065c;transform:translateX(0.73px) scaleX(1.0976);-webkit-text-stroke:0.3px'>---</span>
<span style='left:179px;top:602px;font:bold 11px/14px "Liberation Sans", sans-serif;color:#06065c;transform:translateX(0.95px) scaleX(1.0972);-webkit-text-stroke:0.3px'>(Tetraploid.)</span>
<span style='left:177px;top:669px;font:bold 11px/14px "Liberation Sans", sans-serif;color:#06065c;transform:translateX(0.73px) scaleX(1.0976);-webkit-text-stroke:0.3px'>---</span>
<span style='left:177px;top:740px;font:bold 11px/14px "Liberation Sans", sans-serif;color:#06065c;transform:translateX(0.73px) scaleX(1.0976);-webkit-text-stroke:0.3px'>---</span>
<span style='left:177px;top:789px;font:bold 11px/14px "Liberation Sans", sans-serif;color:#06065c;transform:translateX(0.73px) scaleX(1.0976);-webkit-text-stroke:0.3px'>---</span>
<span style='left:862px;top:128px;font:bold 9.4px/12px "DejaVu Sans", "Liberation Sans", sans-serif;color:#26267c;transform:translateX(0.83px) scaleX(0.9300);-webkit-text-stroke:0.3px'>B</span>
<span style='left:890px;top:128px;font:bold 9.4px/12px "DejaVu Sans", "Liberation Sans", sans-serif;color:#26267c;transform:translateX(0.69px) scaleX(0.9300);-webkit-text-stroke:0.3px'>v</span>
<span style='left:861px;top:147px;font:bold 9.4px/12px "DejaVu Sans", "Liberation Sans", sans-serif;color:#26267c;transform:translateX(0.43px) scaleX(0.9300);-webkit-text-stroke:0.3px'>W</span>
<span style='left:890px;top:147px;font:bold 9.4px/12px "DejaVu Sans", "Liberation Sans", sans-serif;color:#26267c;transform:translateX(0.69px) scaleX(0.9300);-webkit-text-stroke:0.3px'>v</span>
<span style='left:862px;top:166px;font:bold 9.4px/12px "DejaVu Sans", "Liberation Sans", sans-serif;color:#26267c;transform:translateX(0.60px) scaleX(0.9300);-webkit-text-stroke:0.3px'>N</span>
<span style='left:890px;top:166px;font:bold 9.4px/12px "DejaVu Sans", "Liberation Sans", sans-serif;color:#26267c;transform:translateX(0.69px) scaleX(0.9300);-webkit-text-stroke:0.3px'>v</span>
<span style='left:862px;top:185px;font:bold 9.4px/12px "DejaVu Sans", "Liberation Sans", sans-serif;color:#26267c;transform:translateX(0.48px) scaleX(0.9300);-webkit-text-stroke:0.3px'>O</span>
<span style='left:890px;top:185px;font:bold 9.4px/12px "DejaVu Sans", "Liberation Sans", sans-serif;color:#26267c;transform:translateX(0.69px) scaleX(0.9300);-webkit-text-stroke:0.3px'>v</span>
<span style='left:860px;top:204px;font:bold 9.4px/12px "DejaVu Sans", "Liberation Sans", sans-serif;color:#26267c;transform:translateX(0.85px) scaleX(0.9300);-webkit-text-stroke:0.3px'>St</span>
<span style='left:890px;top:204px;font:bold 9.4px/12px "DejaVu Sans", "Liberation Sans", sans-serif;color:#26267c;transform:translateX(0.69px) scaleX(0.9300);-webkit-text-stroke:0.3px'>v</span>
<span style='left:862px;top:223px;font:bold 9.4px/12px "DejaVu Sans", "Liberation Sans", sans-serif;color:#26267c;transform:translateX(0.36px) scaleX(0.9300);-webkit-text-stroke:0.3px'>K</span>
<span style='left:890px;top:223px;font:bold 9.4px/12px "DejaVu Sans", "Liberation Sans", sans-serif;color:#26267c;transform:translateX(0.69px) scaleX(0.9300);-webkit-text-stroke:0.3px'>v</span>
<span style='left:863px;top:242px;font:bold 9.4px/12px "DejaVu Sans", "Liberation Sans", sans-serif;color:#26267c;transform:translateX(0.06px) scaleX(0.9300);-webkit-text-stroke:0.3px'>S</span>
<span style='left:890px;top:242px;font:bold 9.4px/12px "DejaVu Sans", "Liberation Sans", sans-serif;color:#26267c;transform:translateX(0.69px) scaleX(0.9300);-webkit-text-stroke:0.3px'>v</span>
<span style='left:859px;top:261px;font:bold 9.4px/12px "DejaVu Sans", "Liberation Sans", sans-serif;color:#26267c;transform:translateX(0.69px) scaleX(0.9300);-webkit-text-stroke:0.3px'>nT</span>
<span style='left:890px;top:261px;font:bold 9.4px/12px "DejaVu Sans", "Liberation Sans", sans-serif;color:#26267c;transform:translateX(0.69px) scaleX(0.9300);-webkit-text-stroke:0.3px'>v</span>
<span style='left:860px;top:280px;font:bold 9.4px/12px "DejaVu Sans", "Liberation Sans", sans-serif;color:#26267c;transform:translateX(0.04px) scaleX(0.9300);-webkit-text-stroke:0.3px'>oT</span>
<span style='left:890px;top:280px;font:bold 9.4px/12px "DejaVu Sans", "Liberation Sans", sans-serif;color:#26267c;transform:translateX(0.69px) scaleX(0.9300);-webkit-text-stroke:0.3px'>v</span>
<span style='left:863px;top:299px;font:bold 9.4px/12px "DejaVu Sans", "Liberation Sans", sans-serif;color:#26267c;transform:translateX(0.18px) scaleX(0.9300);-webkit-text-stroke:0.3px'>T</span>
<span style='left:890px;top:299px;font:bold 9.4px/12px "DejaVu Sans", "Liberation Sans", sans-serif;color:#26267c;transform:translateX(0.69px) scaleX(0.9300);-webkit-text-stroke:0.3px'>v</span>
<span style='left:862px;top:318px;font:bold 9.4px/12px "DejaVu Sans", "Liberation Sans", sans-serif;color:#26267c;transform:translateX(0.83px) scaleX(0.9300);-webkit-text-stroke:0.3px'>V</span>
<span style='left:890px;top:318px;font:bold 9.4px/12px "DejaVu Sans", "Liberation Sans", sans-serif;color:#26267c;transform:translateX(0.69px) scaleX(0.9300);-webkit-text-stroke:0.3px'>v</span>
<span style='left:856px;top:337px;font:bold 9.4px/12px "DejaVu Sans", "Liberation Sans", sans-serif;color:#26267c;transform:translateX(0.67px) scaleX(0.9300);-webkit-text-stroke:0.3px'>SüT</span>
<span style='left:890px;top:337px;font:bold 9.4px/12px "DejaVu Sans", "Liberation Sans", sans-serif;color:#26267c;transform:translateX(0.69px) scaleX(0.9300);-webkit-text-stroke:0.3px'>v</span>
<span style='left:860px;top:356px;font:bold 9.4px/12px "DejaVu Sans", "Liberation Sans", sans-serif;color:#26267c;transform:translateX(0.16px) scaleX(0.9300);-webkit-text-stroke:0.3px'>FL</span>
<span style='left:890px;top:356px;font:bold 9.4px/12px "DejaVu Sans", "Liberation Sans", sans-serif;color:#26267c;transform:translateX(0.69px) scaleX(0.9300);-webkit-text-stroke:0.3px'>v</span>
<span style='left:920px;top:128px;font:bold 9.4px/12px "DejaVu Sans", "Liberation Sans", sans-serif;color:#26267c;transform:translateX(0.35px) scaleX(0.9300);-webkit-text-stroke:0.3px'>ni</span>
<span style='left:919px;top:147px;font:bold 9.4px/12px "DejaVu Sans", "Liberation Sans", sans-serif;color:#26267c;transform:translateX(0.42px) scaleX(0.9300);-webkit-text-stroke:0.3px'>sn</span>
<span style='left:919px;top:166px;font:bold 9.4px/12px "DejaVu Sans", "Liberation Sans", sans-serif;color:#26267c;transform:translateX(0.19px) scaleX(0.9300);-webkit-text-stroke:0.3px'>oa</span>
<span style='left:918px;top:185px;font:bold 9.4px/12px "DejaVu Sans", "Liberation Sans", sans-serif;color:#26267c;transform:translateX(0.84px) scaleX(0.9300);-webkit-text-stroke:0.3px'>ua</span>
<span style='left:919px;top:204px;font:bold 9.4px/12px "DejaVu Sans", "Liberation Sans", sans-serif;color:#26267c;transform:translateX(0.54px) scaleX(0.9300);-webkit-text-stroke:0.3px'>sa</span>
<span style='left:917px;top:223px;font:bold 9.4px/12px "DejaVu Sans", "Liberation Sans", sans-serif;color:#26267c;transform:translateX(0.68px) scaleX(0.9300);-webkit-text-stroke:0.3px'>om</span>
<span style='left:917px;top:242px;font:bold 9.4px/12px "DejaVu Sans", "Liberation Sans", sans-serif;color:#26267c;transform:translateX(0.33px) scaleX(0.9300);-webkit-text-stroke:0.3px'>um</span>
<span style='left:917px;top:261px;font:bold 9.4px/12px "DejaVu Sans", "Liberation Sans", sans-serif;color:#26267c;transform:translateX(0.91px) scaleX(0.9300);-webkit-text-stroke:0.3px'>sm</span>
<span style='left:919px;top:280px;font:bold 9.4px/12px "DejaVu Sans", "Liberation Sans", sans-serif;color:#26267c;transform:translateX(0.42px) scaleX(0.9300);-webkit-text-stroke:0.3px'>co</span>
<span style='left:974px;top:127px;font:bold 10px/13px "DejaVu Sans", "Liberation Sans", sans-serif;color:#0404b8;transform:translateX(0.87px) scaleX(0.9714);-webkit-text-stroke:0.3px'>KZ</span>
<span style='left:996px;top:127px;font:bold 10px/13px "DejaVu Sans", "Liberation Sans", sans-serif;color:#0404b8;transform:translateX(0.01px) scaleX(0.9158);-webkit-text-stroke:0.3px'>Status_Bundesland</span>
<span style='left:980px;top:147px;font:9.6px/12px "DejaVu Sans", "Liberation Sans", sans-serif;color:#0404b8;transform:translateX(0.66px) scaleX(0.8850);-webkit-text-stroke:0.22px'>v</span>
<span style='left:996px;top:147px;font:9.6px/12px "DejaVu Sans", "Liberation Sans", sans-serif;color:#0404b8;transform:translateX(0.48px) scaleX(0.8916);-webkit-text-stroke:0.22px'>vorkommend</span>
<span style='left:979px;top:166px;font:9.6px/12px "DejaVu Sans", "Liberation Sans", sans-serif;color:#0404b8;transform:translateX(0.88px) scaleX(0.8850);-webkit-text-stroke:0.22px'>()</span>
<span style='left:996px;top:166px;font:9.6px/12px "DejaVu Sans", "Liberation Sans", sans-serif;color:#0404b8;transform:translateX(0.07px) scaleX(0.8464);-webkit-text-stroke:0.22px'>unbeständig</span>
<span style='left:980px;top:185px;font:9.6px/12px "DejaVu Sans", "Liberation Sans", sans-serif;color:#0404b8;transform:translateX(0.88px) scaleX(0.8850);-webkit-text-stroke:0.22px'>?</span>
<span style='left:996px;top:185px;font:9.6px/12px "DejaVu Sans", "Liberation Sans", sans-serif;color:#0404b8;transform:translateX(0.70px) scaleX(0.8731);-webkit-text-stroke:0.22px'>Vorkommen fraglich</span>
<span style='left:981px;top:204px;font:9.6px/12px "DejaVu Sans", "Liberation Sans", sans-serif;color:#0404b8;transform:translateX(0.43px) scaleX(0.8850);-webkit-text-stroke:0.22px'>f</span>
<span style='left:996px;top:204px;font:9.6px/12px "DejaVu Sans", "Liberation Sans", sans-serif;color:#0404b8;transform:translateX(0.50px) scaleX(0.8140);-webkit-text-stroke:0.22px'>fehlt</span>
<span style='left:980px;top:223px;font:9.6px/12px "DejaVu Sans", "Liberation Sans", sans-serif;color:#0404b8;transform:translateX(0.77px) scaleX(0.8850);-webkit-text-stroke:0.22px'>a</span>
<span style='left:996px;top:223px;font:9.6px/12px "DejaVu Sans", "Liberation Sans", sans-serif;color:#0404b8;transform:translateX(0.26px) scaleX(0.8809);-webkit-text-stroke:0.22px'>ausgestorben</span>
<span style='left:981px;top:242px;font:9.6px/12px "DejaVu Sans", "Liberation Sans", sans-serif;color:#0404b8;transform:translateX(0.43px) scaleX(0.8850);-webkit-text-stroke:0.22px'>!</span>
<span style='left:996px;top:242px;font:9.6px/12px "DejaVu Sans", "Liberation Sans", sans-serif;color:#0404b8;transform:translateX(0.70px) scaleX(0.8525);-webkit-text-stroke:0.22px'>Abweichung von Standardliste(?)</span>
<span style='left:854px;top:382px;font:9.6px/12px "DejaVu Sans", "Liberation Sans", sans-serif;color:#0c6a0c;transform:translateX(0.95px) scaleX(0.8521);-webkit-text-stroke:0.22px'>Datenquelle:</span>
<span style='left:1004px;top:393px;font:9.6px/12px "DejaVu Sans", "Liberation Sans", sans-serif;color:#0c6a0c;transform:translateX(0.56px) scaleX(0.9367);-webkit-text-stroke:0.22px'>Manfred A. FISCHER</span>
<span style='left:1036px;top:405px;font:9.6px/12px "DejaVu Sans", "Liberation Sans", sans-serif;color:#0c6a0c;transform:translateX(0.57px) scaleX(0.9274);-webkit-text-stroke:0.22px'>Karl OSWALD</span>
<span style='left:1023px;top:417px;font:9.6px/12px "DejaVu Sans", "Liberation Sans", sans-serif;color:#0c6a0c;transform:translateX(0.52px) scaleX(0.9119);-webkit-text-stroke:0.22px'>Wolfgang ADLER</span>
<span style='left:927px;top:440px;font:bold 13px/17px "DejaVu Sans", "Liberation Sans", sans-serif;color:#0c6a0c;transform:translateX(0.71px) scaleX(0.8319);-webkit-text-stroke:0.3px'>EXKURSIONSFLORA</span>
<span style='left:931px;top:469px;font:9.6px/12px "DejaVu Sans", "Liberation Sans", sans-serif;color:#0c6a0c;transform:translateX(0.05px) scaleX(0.8113);-webkit-text-stroke:0.22px'>für</span>
<span style='left:929px;top:493px;font:bold 11px/14px "DejaVu Sans", "Liberation Sans", sans-serif;color:#0c6a0c;transform:translateX(0.54px) scaleX(0.9121);-webkit-text-stroke:0.3px'>ÖSTERREICH</span>
<span style='left:929px;top:507px;font:bold 11px/14px "DejaVu Sans", "Liberation Sans", sans-serif;color:#0c6a0c;transform:translateX(0.12px) scaleX(0.8810);-webkit-text-stroke:0.3px'>LIECHTENSTEIN</span>
<span style='left:929px;top:521px;font:bold 11px/14px "DejaVu Sans", "Liberation Sans", sans-serif;color:#0c6a0c;transform:translateX(0.32px) scaleX(0.9065);-webkit-text-stroke:0.3px'>SÜDTIROL</span>
<span style='left:865px;top:548px;font:9.6px/12px "DejaVu Sans", "Liberation Sans", sans-serif;color:#0c6a0c;transform:translateX(0.13px) scaleX(0.8300);-webkit-text-stroke:0.22px'>3. Auflage 2008</span>
<span style='left:864px;top:559px;font:9.6px/12px "DejaVu Sans", "Liberation Sans", sans-serif;color:#0c6a0c;transform:translateX(0.89px) scaleX(0.8618);-webkit-text-stroke:0.22px'>Biologiezentrum der Oberösterreichischen Landesmuseen</span>
<span style='left:176px;top:852px;font:bold 11px/14px "Liberation Sans", sans-serif;color:#f26a0a;transform:translateX(0.71px) scaleX(1.0480);-webkit-text-stroke:0.3px'>Blühmonate</span>
<span style='left:41px;top:908px;font:bold 12px/16px "Liberation Sans", sans-serif;color:#d40a0a;transform:translateX(0.38px) scaleX(1.0000);-webkit-text-stroke:0.3px'>1</span>
<span style='left:102px;top:908px;font:bold 12px/16px "Liberation Sans", sans-serif;color:#d40a0a;transform:translateX(0.83px) scaleX(1.0000);-webkit-text-stroke:0.3px'>2</span>
<span style='left:163px;top:908px;font:bold 12px/16px "Liberation Sans", sans-serif;color:#d40a0a;transform:translateX(0.91px) scaleX(1.0000);-webkit-text-stroke:0.3px'>3</span>
<span style='left:224px;top:908px;font:bold 12px/16px "Liberation Sans", sans-serif;color:#d40a0a;transform:translateX(0.87px) scaleX(1.0000);-webkit-text-stroke:0.3px'>4</span>
<span style='left:285px;top:908px;font:bold 12px/16px "Liberation Sans", sans-serif;color:#d40a0a;transform:translateX(0.94px) scaleX(1.0000);-webkit-text-stroke:0.3px'>5</span>
<span style='left:347px;top:908px;font:bold 12px/16px "Liberation Sans", sans-serif;color:#d40a0a;transform:translateX(0.02px) scaleX(1.0000);-webkit-text-stroke:0.3px'>6</span>
<span style='left:408px;top:908px;font:bold 12px/16px "Liberation Sans", sans-serif;color:#d40a0a;transform:translateX(0.11px) scaleX(1.0000);-webkit-text-stroke:0.3px'>7</span>
<span style='left:469px;top:908px;font:bold 12px/16px "Liberation Sans", sans-serif;color:#d40a0a;transform:translateX(0.19px) scaleX(1.0000);-webkit-text-stroke:0.3px'>8</span>
<span style='left:530px;top:908px;font:bold 12px/16px "Liberation Sans", sans-serif;color:#d40a0a;transform:translateX(0.39px) scaleX(1.0000);-webkit-text-stroke:0.3px'>9</span>
<span style='left:587px;top:908px;font:bold 12px/16px "Liberation Sans", sans-serif;color:#d40a0a;transform:translateX(0.85px) scaleX(1.0000);-webkit-text-stroke:0.3px'>10</span>
<span style='left:649px;top:908px;font:bold 12px/16px "Liberation Sans", sans-serif;color:#d40a0a;transform:translateX(0.17px) scaleX(1.0000);-webkit-text-stroke:0.3px'>11</span>
<span style='left:710px;top:908px;font:bold 12px/16px "Liberation Sans", sans-serif;color:#d40a0a;transform:translateX(0.00px) scaleX(1.0000);-webkit-text-stroke:0.3px'>12</span>
<span style='left:790px;top:935px;font:bold 11px/14px "DejaVu Sans", "Liberation Sans", sans-serif;color:#000;transform:translateX(0.80px) scaleX(0.9054);-webkit-text-stroke:0.3px'>Verbunden mit: "Drahtlose Netzwerkverbindung"</span>
<span style='left:767px;top:955px;font:11px/14px "DejaVu Sans", "Liberation Sans", sans-serif;color:#000;transform:translateX(0.00px) scaleX(0.8599);-webkit-text-stroke:0.22px'>Verbindung mit: UPC020438</span>
<span style='left:766px;top:968px;font:11px/14px "DejaVu Sans", "Liberation Sans", sans-serif;color:#000;transform:translateX(0.35px) scaleX(0.8660);-webkit-text-stroke:0.22px'>Signalstärke: Sehr gut</span>
<span style='left:21px;top:1005px;font:bold 11px/14px "DejaVu Sans", "Liberation Sans", sans-serif;color:#000;transform:translateX(0.61px) scaleX(0.9223);-webkit-text-stroke:0.3px'>Start</span>
<span style='left:307px;top:1005px;font:bold 11px/14px "DejaVu Sans", "Liberation Sans", sans-serif;color:#000;transform:translateX(0.52px) scaleX(0.8773);-webkit-text-stroke:0.3px'>Microsoft Excel - EFÖL...</span>
<span style='left:470px;top:1005px;font:11px/14px "DejaVu Sans", "Liberation Sans", sans-serif;color:#000;transform:translateX(0.27px) scaleX(0.9126);-webkit-text-stroke:0.22px'>*E:\EFÖLS2007\Botanisc...</span>
<span style='left:1241px;top:1005px;font:11px/14px "DejaVu Sans", "Liberation Sans", sans-serif;color:#000;transform:translateX(0.51px) scaleX(0.8733);-webkit-text-stroke:0.22px'>14:24</span>
</div></body></html>
